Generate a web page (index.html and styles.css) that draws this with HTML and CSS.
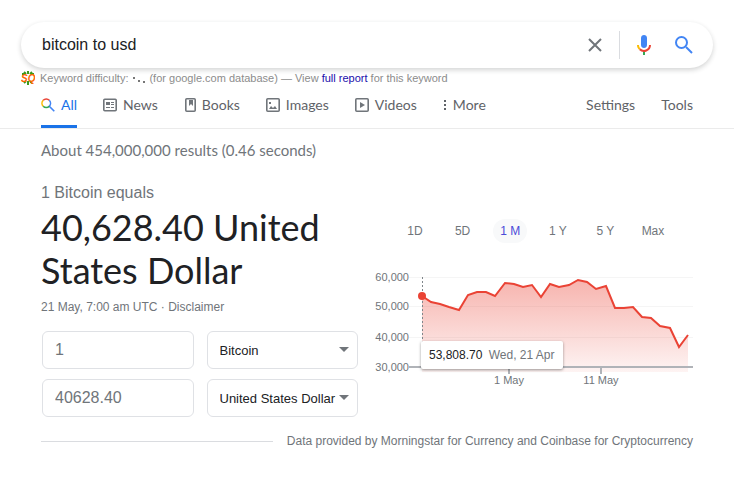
FILE: index.html
```html
<!DOCTYPE html>
<html lang="en">
<head>
    <meta charset="UTF-8">
    <meta name="viewport" content="width=device-width, initial-scale=1.0">
    <title>bitcoin to usd - Search</title>
    <link rel="stylesheet" href="styles.css">
</head>
<body>
    <form class="search-box" role="search" onsubmit="return false">
        <input type="text" class="search-input" name="q" value="bitcoin to usd" aria-label="Search">
        <button type="reset" class="icon-btn clear-btn" aria-label="Clear">
            <svg width="16" height="16" viewBox="0 0 16 16"><path d="M2 2L14 14M14 2L2 14" stroke="#70757a" stroke-width="2" fill="none"/></svg>
        </button>
        <button type="button" class="icon-btn" aria-label="Search by voice">
            <svg width="24" height="24" viewBox="0 0 24 24">
                <path fill="#4285f4" d="M12 15c1.700 0 3-1.300 3-3V5c0-1.700-1.300-3-3-3S9 3.300 9 5v7c0 1.700 1.300 3 3 3z"/>
                <path fill="#34a853" d="M11 18.080h2V22h-2z"/>
                <path fill="#fbbc05" d="M7.050 16.870C5.780 15.600 5 13.900 5 12h2c0 1.370.56 2.610 1.470 3.510z"/>
                <path fill="#ea4335" d="M12 16.930a4.970 4.970 0 0 1-3.540-1.450l-1.410 1.410A6.990 6.990 0 0 0 19 12h-2c0 2.760-2.240 4.930-5 4.930z"/>
            </svg>
        </button>
        <button type="submit" class="icon-btn" aria-label="Search">
            <svg width="24" height="24" viewBox="0 0 24 24"><path d="M15 14L21 20" stroke="#4285f4" stroke-width="2"/><circle cx="10.500" cy="9.500" r="5.500" fill="none" stroke="#4285f4" stroke-width="2"/></svg>
        </button>
    </form>

    <div class="difficulty">
        <svg class="seo-logo" width="14" height="14" viewBox="0 0 14 14">
            <path d="M3 1l2 2M7 0v3M11 1l-2 2M1 3h3M13 3h-3M3 12l2-2M7 14v-4M11 12l-2-2" stroke="#3d9a1d" stroke-width="2"/>
            <text x="0" y="11">SQ</text>
        </svg>
        <span>Keyword difficulty:</span>
        <svg class="dots" width="14" height="10" viewBox="0 0 14 10"><path d="M0 4h2v2H0zM5 7h2v2H5zM10 8h2v2h-2z" fill="#777"/></svg>
        <span>(for google.com database) — View <a href="#report">full report</a> for this keyword</span>
    </div>

    <nav class="tabs">
        <a href="#all" class="tab active">
            <svg width="14" height="14" viewBox="0 0 14 14" fill="none" stroke-width="1.600">
                <path d="M2.200 8.300A4.300 4.300 0 0 1 2.200 2.300" stroke="#fbbc04"/>
                <path d="M2.200 2.300A4.300 4.300 0 0 1 8.300 2.300" stroke="#ea4335"/>
                <path d="M8.300 2.300A4.300 4.300 0 0 1 8.300 8.300L13.300 13.300" stroke="#4285f4"/>
                <path d="M8.300 8.300A4.300 4.300 0 0 1 2.200 8.300" stroke="#34a853"/>
            </svg>All</a>
        <a href="#news" class="tab">
            <svg width="14" height="14" viewBox="0 0 14 14"><rect x=".8" y="1.300" width="12.400" height="11.400" rx="1" fill="none" stroke="#70757a" stroke-width="1.600"/><path d="M3 4h4v3H3zM8 4h3v1H8zM8 6h3v1H8zM3 9h4v1H3zM8 9h3v1H8z" fill="#70757a"/></svg>News</a>
        <a href="#books" class="tab">
            <svg width="12" height="14" viewBox="0 0 12 14"><rect x="1.800" y=".8" width="9.400" height="12.400" rx="1" fill="none" stroke="#70757a" stroke-width="1.600"/><path d="M5 2h4v6L7 6 5 8z" fill="#70757a"/></svg>Books</a>
        <a href="#images" class="tab">
            <svg width="14" height="14" viewBox="0 0 14 14"><rect x=".8" y=".8" width="12.400" height="12.400" rx="1" fill="none" stroke="#70757a" stroke-width="1.600"/><path d="M3 11l2-3 2 2 2-2 2 3zM3 4h2v2H3z" fill="#70757a"/></svg>Images</a>
        <a href="#videos" class="tab">
            <svg width="14" height="14" viewBox="0 0 14 14"><rect x=".8" y=".8" width="12.400" height="12.400" rx="1" fill="none" stroke="#70757a" stroke-width="1.600"/><path d="M5 4l5 3-5 3z" fill="#70757a"/></svg>Videos</a>
        <a href="#more" class="tab">
            <svg width="4" height="14" viewBox="0 0 4 14"><path d="M1 2h2v2H1zM1 6h2v2H1zM1 10h2v2H1z" fill="#5f6368"/></svg>More</a>
        <a href="#settings" class="tab settings">Settings</a>
        <a href="#tools" class="tab">Tools</a>
    </nav>

    <main>
        <p class="stats">About 454,000,000 results (0.46 seconds)</p>

        <div class="converter">
            <section>
                <p class="equals">1 Bitcoin equals</p>
                <h1>40,628.40 United States Dollar</h1>
                <p class="updated">21 May, 7:00 am UTC · <a href="#disclaimer">Disclaimer</a></p>
                <form class="fields">
                    <input type="text" class="amount" value="1" aria-label="Amount from">
                    <div class="select-box">
                        <select aria-label="Currency from">
                            <option>Bitcoin</option>
                            <option>Ether</option>
                        </select>
                    </div>
                    <input type="text" class="amount" value="40628.40" aria-label="Amount to">
                    <div class="select-box">
                        <select aria-label="Currency to">
                            <option>United States Dollar</option>
                            <option>Euro</option>
                        </select>
                    </div>
                </form>
            </section>

            <section class="history">
                <div class="ranges">
                    <button type="button">1D</button>
                    <button type="button">5D</button>
                    <button type="button" class="selected">1 M</button>
                    <button type="button">1 Y</button>
                    <button type="button">5 Y</button>
                    <button type="button">Max</button>
                </div>
                <div class="chart">
                    <svg viewBox="0 0 318 124" role="img" aria-label="Bitcoin price, last month">
                        <defs>
                            <linearGradient id="area" x1="0" y1="0" x2="0" y2="1">
                                <stop offset="0" stop-color="#ea4335" stop-opacity="0.4"/>
                                <stop offset="1" stop-color="#ea4335" stop-opacity="0.06"/>
                            </linearGradient>
                        </defs>
                        <path class="grid" d="M34 11.500H318M34 40.500H318M34 71.500H318"/>
                        <path fill="url(#area)" d="M47 30L56 36 65 38 74 41 84 44 93 29 102 26 111 26 120 30 130 17 139 18 148 21 157 19 166 31 175 18 184 21 194 19 203 14 212 16 221 23 231 20 240 42 249 42 258 41 267 51 276 52 285 60 295 62 304 81 313 69V106H47z"/>
                        <path class="line" d="M47 30L56 36 65 38 74 41 84 44 93 29 102 26 111 26 120 30 130 17 139 18 148 21 157 19 166 31 175 18 184 21 194 19 203 14 212 16 221 23 231 20 240 42 249 42 258 41 267 51 276 52 285 60 295 62 304 81 313 69"/>
                        <path class="axis" d="M34 101H318M134 101V108M226 101V108"/>
                        <path class="cursor" d="M47.500 11V101"/>
                        <circle cx="47" cy="30" r="4" fill="#ea4335"/>
                        <g text-anchor="end">
                            <text x="34" y="15">60,000</text>
                            <text x="34" y="44">50,000</text>
                            <text x="34" y="75">40,000</text>
                            <text x="34" y="105">30,000</text>
                        </g>
                        <g text-anchor="middle">
                            <text x="134" y="118">1 May</text>
                            <text x="226" y="118">11 May</text>
                        </g>
                    </svg>
                    <div class="tooltip"><b>53,808.70</b> Wed, 21 Apr</div>
                </div>
            </section>
        </div>

        <footer>Data provided by Morningstar for Currency and Coinbase for Cryptocurrency</footer>
    </main>
</body>
</html>
```

FILE: styles.css
```css
* {
    box-sizing: border-box;
}
body {
    margin: 0;
    font-family: "Liberation Sans", Arial, sans-serif;
    font-size: 12px;
    color: #70757a;
    background-color: #fff;
}
p, h1 {
    margin: 0;
    font-weight: normal;
}
a {
    color: inherit;
    text-decoration: none;
}
button, input, select {
    font-family: inherit;
    border: none;
    background: none;
    outline: none;
    margin: 0;
    padding: 0;
}
svg {
    display: block;
    flex: none;
}
.search-box {
    display: flex;
    align-items: center;
    height: 46px;
    margin: 22px 21px 0;
    padding: 0 18px 0 21px;
    border-radius: 23px;
    box-shadow: 0 2px 5px rgba(32, 33, 36, 0.2);
}
.search-input {
    flex: 1;
    min-width: 0;
    font-size: 16px;
    color: #202124;
}
.icon-btn {
    width: 24px;
    height: 24px;
    margin-left: 15px;
}
.clear-btn {
    width: 33px;
    height: 28px;
    margin: 0 -3px 0 0;
    border-right: 1px solid #dadce0;
}
.difficulty {
    display: flex;
    align-items: center;
    gap: 5px;
    height: 20px;
    padding-left: 21px;
    font-size: 11px;
    color: #8c8c8c;
}
.difficulty a {
    color: #1a0dab;
}
.seo-logo text {
    font-size: 10px;
    font-weight: bold;
    font-style: italic;
    fill: #f60;
}
.dots {
    margin-right: -3px;
}
.tabs {
    display: flex;
    gap: 26px;
    height: 41px;
    padding: 0 41px;
    border-bottom: 1px solid #ebebeb;
    font-family: Lato, sans-serif;
    font-size: 14px;
    line-height: 32px;
    color: #5f6368;
}
.tab {
    display: flex;
    align-items: center;
    gap: 6px;
    height: 40px;
    padding-bottom: 3px;
    border-bottom: 3px solid transparent;
}
.tab.active {
    color: #1a73e8;
    border-bottom-color: #1a73e8;
}
.settings {
    margin-left: auto;
}
main {
    padding: 0 41px;
}
.stats {
    padding-top: 11px;
    font-family: Lato, sans-serif;
    font-size: 15px;
    line-height: 20px;
}
.converter {
    display: grid;
    grid-template-columns: 1fr 1fr;
    gap: 16px;
    margin-top: 21px;
}
.equals {
    padding-bottom: 1px;
    font-size: 16px;
    line-height: 24px;
}
h1 {
    font-family: Lato, sans-serif;
    font-size: 36px;
    line-height: 43px;
    color: #202124;
}
.updated {
    margin-top: 6px;
    line-height: 18px;
}
.fields {
    display: grid;
    grid-template-columns: 1fr 1fr;
    gap: 10px 13px;
    margin: 15px 1px 0;
}
.amount, select {
    width: 100%;
    height: 38px;
    padding: 0 12px;
    border: 1px solid #dfe1e5;
    border-radius: 6px;
}
.amount {
    font-size: 16px;
    color: #70757a;
}
.select-box {
    position: relative;
}
.select-box::after {
    content: "";
    position: absolute;
    right: 9px;
    top: 16px;
    border: 5px solid transparent;
    border-top-color: #70757a;
    border-bottom: none;
    pointer-events: none;
}
select {
    appearance: none;
    font-size: 13px;
    color: #202124;
}
.history {
    padding-top: 38px;
}
.ranges {
    display: flex;
    justify-content: space-between;
    padding: 0 23px;
}
.ranges button {
    min-width: 34px;
    height: 24px;
    border-radius: 12px;
    font-size: 12px;
    color: #70757a;
}
.ranges .selected {
    background-color: #f8f9fa;
    color: #4b4bd8;
}
.chart {
    position: relative;
    margin-top: 23px;
}
.chart svg {
    width: 100%;
}
.chart text {
    font-size: 11px;
    fill: #70757a;
}
.grid {
    stroke: #f5f5f5;
}
.line {
    fill: none;
    stroke: #ea4335;
    stroke-width: 2;
}
.axis {
    fill: none;
    stroke: #b0b3b8;
    stroke-width: 2;
}
.cursor {
    stroke: #80868b;
    stroke-dasharray: 2 2;
}
.tooltip {
    position: absolute;
    left: 46px;
    top: 75px;
    padding: 0 8px;
    line-height: 28px;
    white-space: nowrap;
    background-color: #fff;
    border-radius: 2px;
    box-shadow: 0 1px 3px rgba(0, 0, 0, 0.4);
}
.tooltip b {
    margin-right: 3px;
    font-weight: normal;
    color: #202124;
}
footer {
    display: flex;
    align-items: center;
    gap: 14px;
    margin-top: 16px;
    line-height: 16px;
}
footer::before {
    content: "";
    flex: 1;
    border-top: 1px solid #dadce0;
}
```
